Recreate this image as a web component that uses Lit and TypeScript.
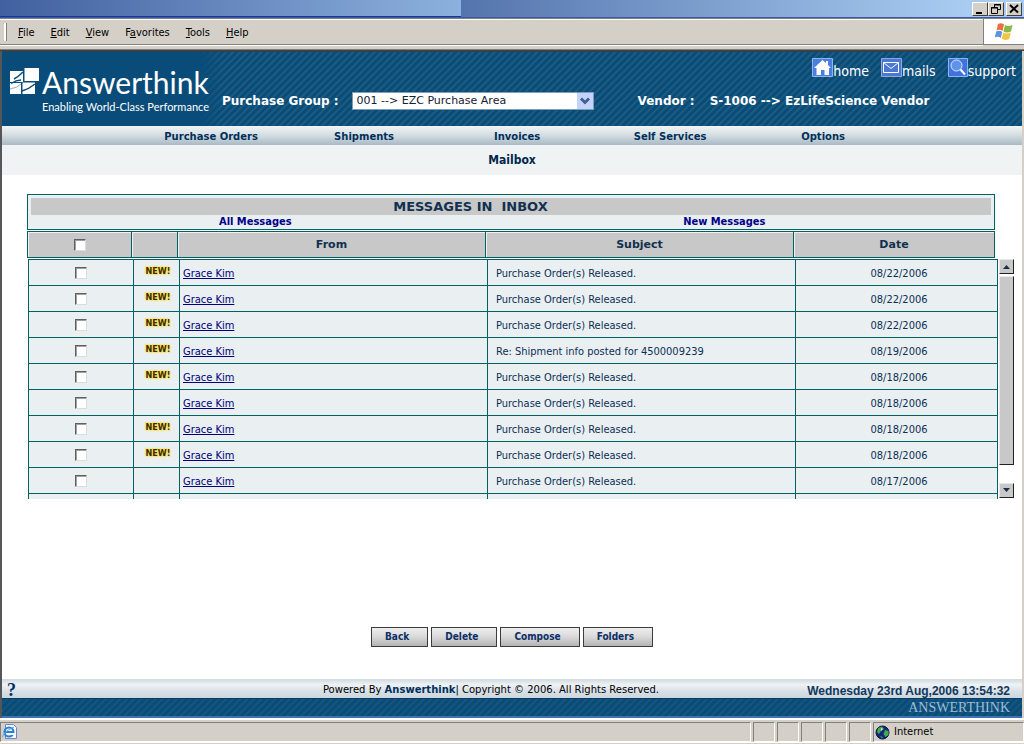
import { LitElement, html, css, svg, nothing } from "lit";
import { customElement, property } from "lit/decorators.js";

interface Message {
  from: string;
  subject: string;
  date: string;
  fresh: boolean;
}

const RELEASED = "Purchase Order(s) Released.";

const MESSAGES: Message[] = [
  { from: "Grace Kim", subject: RELEASED, date: "08/22/2006", fresh: true },
  { from: "Grace Kim", subject: RELEASED, date: "08/22/2006", fresh: true },
  { from: "Grace Kim", subject: RELEASED, date: "08/22/2006", fresh: true },
  { from: "Grace Kim", subject: "Re: Shipment info posted for 4500009239", date: "08/19/2006", fresh: true },
  { from: "Grace Kim", subject: RELEASED, date: "08/18/2006", fresh: true },
  { from: "Grace Kim", subject: RELEASED, date: "08/18/2006", fresh: false },
  { from: "Grace Kim", subject: RELEASED, date: "08/18/2006", fresh: true },
  { from: "Grace Kim", subject: RELEASED, date: "08/18/2006", fresh: true },
  { from: "Grace Kim", subject: RELEASED, date: "08/17/2006", fresh: false },
];

const MENUS: [string, string, string][] = [
  ["", "F", "ile"],
  ["", "E", "dit"],
  ["", "V", "iew"],
  ["F", "a", "vorites"],
  ["", "T", "ools"],
  ["", "H", "elp"],
];

/* ---------- browser window: title bar and menu ---------- */

@customElement("window-bar")
export class WindowBar extends LitElement {
  static styles = css`
    :host { display: block; font: 11px/14px "DejaVu Sans Condensed", "DejaVu Sans", sans-serif; }
    .title {
      display: flex; height: 18px; box-sizing: border-box;
      border-bottom: 1px solid #3c58a4;
      background: linear-gradient(90deg, #5071aa, #a9cdf2);
    }
    .caption { width: 45%; background: linear-gradient(90deg, #41609f, #8db1de); border-bottom: 1px solid #16379a; box-sizing: border-box; }
    .lead { flex: 1; background: linear-gradient(90deg, #5474ad, #a9cdf2); }
    .controls { display: flex; padding: 2px 2px 0 0; }
    .controls button {
      width: 16px; height: 14px; padding: 0; background: #d4d0c8; border: 1px solid;
      border-color: #fff #404040 #404040 #fff; display: flex;
    }
    .controls button:last-child { margin-left: 2px; }
    .menu {
      display: flex; height: 31px; box-sizing: border-box; background: #d4d0c8;
      border-top: 1px solid #808080; border-bottom: 4px solid #d4d0c8;
    }
    .inner { flex: 1; display: flex; align-items: center; border-top: 1px solid #fff; border-bottom: 1px solid #808080; box-shadow: 0 1px #fff; }
    .grip { width: 2px; height: 18px; margin: 0 11px 0 4px; border-right: 1px solid #808080; background: #fff; }
    .items { display: flex; gap: 16px; padding-top: 2px; }
    .items button { padding: 0; border: 0; background: none; font: inherit; color: #000; }
    .flag { width: 40px; border-left: 1px solid #808080; background: #fff; border-bottom: 1px solid #808080; display: flex; align-items: center; justify-content: center; }
    .edge { height: 2px; background: #404040; border-top: 1px solid #808080; box-sizing: border-box; }
  `;

  render() {
    return html`
      <div class="title">
        <div class="caption"></div>
        <div class="lead"></div>
        <div class="controls">
          <button aria-label="Minimize"><svg width="14" height="12"><path d="M3 9h6v2H3z" /></svg></button>
          <button aria-label="Restore">
            <svg width="14" height="12" fill="none" stroke="#000">
              <path d="M5.500 4V1.500h6v5H9M5 2h7M2.500 4.500h6v6h-6zM2 5h7" />
            </svg>
          </button>
          <button aria-label="Close"><svg width="14" height="12"><path d="M3 2l8 7.500M11 2L3 9.500" stroke="#000" stroke-width="2" /></svg></button>
        </div>
      </div>
      <div class="menu">
        <div class="inner">
          <span class="grip"></span>
          <div class="items">
            ${MENUS.map(([a, key, b]) => html`<button>${a}<u>${key}</u>${b}</button>`)}
          </div>
        </div>
        <div class="flag">
          <svg width="20" height="19" viewBox="0 0 20 19">
            <path d="M4 2Q7 .5 10 2.500L8.500 9Q5.500 7 2.500 8.500z" fill="#e8703a" />
            <path d="M11 3Q14 5 18.500 3L17 9.500Q13 11.500 9.500 9.500z" fill="#86b84a" />
            <path d="M2.200 9.500Q5.500 8 8.200 10L6.800 16Q4 14 .7 15.500z" fill="#5b93dc" />
            <path d="M9.200 10.500Q13 12.500 16.700 10.500L15.200 17Q11 19 7.800 16.800z" fill="#f5c440" />
          </svg>
        </div>
      </div>
      <div class="edge"></div>
    `;
  }
}

/* ---------- site header ---------- */

@customElement("site-header")
export class SiteHeader extends LitElement {
  static styles = css`
    :host { display: block; font-family: "DejaVu Sans", sans-serif; color: #fff; }
    .banner {
      display: flex; height: 75px; box-sizing: border-box;
      background: repeating-linear-gradient(135deg, #0a4c79 0 2px, #1c5c80 3px 4px, #0a4c79 5px);
      border-top: 1px solid #33404e;
    }
    .brand { display: flex; align-items: flex-start; width: 220px; padding: 14px 0 0 8px; box-sizing: border-box; background: linear-gradient(90deg, #0a4c79 90%, transparent); }
    .mark { margin-top: 2px; }
    .words { padding-left: 3px; font-family: Lato, sans-serif; white-space: nowrap; }
    .name { display: block; font-size: 30px; line-height: 32px; }
    .motto { display: block; font-size: 11px; line-height: 18px; }
    .side { flex: 1; display: flex; flex-direction: column; min-width: 0; }
    .tools { display: flex; justify-content: flex-end; gap: 12px; height: 35px; padding: 6px 6px 0 0; box-sizing: border-box; }
    .tools a { display: flex; align-items: flex-start; color: #fff; text-decoration: none; font: 14px/27px "DejaVu Sans Condensed", "DejaVu Sans", sans-serif; height: 21px; }
    .facts { display: flex; align-items: center; height: 28px; font-weight: 700; white-space: nowrap; font-size: 12px; }
    .pick { position: relative; width: 242px; height: 18px; margin: 0 44px 0 13px; }
    .pick select {
      appearance: none; display: block; width: 100%; height: 18px; box-sizing: border-box; margin: 0; padding: 0 20px 0 4px;
      border: 1px solid #7f9db9; border-radius: 0; background: #fff; color: #123;
      font: 11px/16px "DejaVu Sans", sans-serif;
    }
    .pick svg { position: absolute; right: 1px; top: 1px; pointer-events: none; }
    .vendor { padding-left: 15px; }
    .nav {
      display: grid; grid-template-columns: repeat(5, 1fr); height: 19px; padding: 0 12% 0 13%;
      background: linear-gradient(#f2f5f6, #d3dce0 50%, #a9b9c4);
    }
    .nav a { text-align: center; color: #00305c; text-decoration: none; font-size: 10px; line-height: 21px; font-weight: 700; }
    .page { margin: 0; height: 30px; background: #eff3f4; color: #00264a; text-align: center; font: 700 12px/30px "DejaVu Sans Condensed", "DejaVu Sans", sans-serif; }
  `;

  render() {
    return html`
      <div class="banner">
        <div class="brand">
          <svg class="mark" width="29" height="27" viewBox="0 0 29 27" fill="#fff">
            <path d="M0 3h13v11H0zM14.500 0H29v13H14.500zM0 15h11v11H0zM12.500 14.500H25V26H12.500z" />
            <path d="M4 11Q8 9 13 4M1 15.500Q6 12 11 12M12 23Q19 21 25 16" fill="none" stroke="#0a4c79" stroke-width="1.500" />
            <path d="M0 21Q7 20 11 16" fill="none" stroke="#8fb0c8" />
          </svg>
          <div class="words">
            <span class="name">Answerthink</span>
            <span class="motto">Enabling World-Class Performance</span>
          </div>
        </div>
        <div class="side">
          <div class="tools">
            <a href="#home">
              <svg width="21" height="20"><path d="M.5.5h20v18H.5z" fill="#4a7fe0" stroke="#8fb4f4" /><path d="M10.500 2L2 10h2.500v7h4.500v-5h3.500v5h4.500v-7H19l-3-3V3h-2v2z" fill="#fff" /></svg>home</a>
            <a href="#mails">
              <svg width="21" height="20"><path d="M.5.5h20v18H.5z" fill="#4a78d4" stroke="#8fa8d8" /><path d="M2.500 4.500h15v10h-15zM2.500 4.500l7.500 6 7.500-6" fill="none" stroke="#fff" /></svg>mails</a>
            <a href="#support">
              <svg width="20" height="20"><path d="M.5.5h19v18H.5z" fill="#3f73dc" stroke="#8fb4f4" /><circle cx="8.500" cy="7.500" r="5.500" fill="#5f93ea" stroke="#dce9ff" /><path d="M12.500 11.500l4.500 5" stroke="#fff" stroke-width="2" /></svg>support</a>
          </div>
          <div class="facts">
            <label for="group">Purchase Group :</label>
            <span class="pick">
              <select id="group"><option>001 --&gt; EZC Purchase Area</option></select>
              <svg width="16" height="16"><path d="M0 0h16v16H0z" fill="#c3d3fb" /><path d="M4 5.500l4 4 4-4" fill="none" stroke="#44608f" stroke-width="3" /></svg>
            </span>
            <span>Vendor :</span>
            <span class="vendor">S-1006 --&gt; EzLifeScience Vendor</span>
          </div>
        </div>
      </div>
      <nav class="nav">
        ${["Purchase Orders", "Shipments", "Invoices", "Self Services", "Options"].map(
          (label) => html`<a href="#">${label}</a>`
        )}
      </nav>
      <h1 class="page">Mailbox</h1>
    `;
  }
}

/* ---------- inbox ---------- */

@customElement("inbox-list")
export class InboxList extends LitElement {
  @property({ attribute: false }) messages: Message[] = [];

  static styles = css`
    :host { display: block; font: 11px/14px "DejaVu Sans Condensed", "DejaVu Sans", sans-serif; color: #0c2f55; }
    .panel { margin-right: 19px; border: 1px solid #006062; padding: 3px; box-sizing: border-box; height: 36px; background: #eaeff2; }
    .heading { margin: 0; background: #c8c8c8; text-align: center; font: 700 13px/17px "DejaVu Sans", sans-serif; padding-right: 81px; color: #12304f; white-space: pre; }
    .filters { display: grid; grid-template-columns: 11fr 12fr; text-align: center; padding: 0 22px 0 0; font-weight: 700; line-height: 13px; }
    .filters a { color: #00008b; text-decoration: none; }
    table { border-collapse: separate; border-spacing: 0; table-layout: fixed; width: 100%; }
    td, th { padding: 0; border: 0 solid #006062; border-width: 1px 0 0 1px; box-sizing: border-box; }
    td:last-child, th:last-child { border-right-width: 1px; }
    .head { margin: 1px 19px 0 0; }
    .head .c1 { width: 104px; }
    th { height: 27px; border-bottom-width: 1px; background: #c8c8c8; box-shadow: inset 1px 1px #eef2f3; font: 700 11px/14px "DejaVu Sans", sans-serif; color: #12304f; }
    .c1 { width: 105px; } .c2 { width: 46px; } .c3, .c4 { width: 308px; }
    .view { display: flex; gap: 1px; height: 240px; margin: 1px 0 0 1px; overflow: hidden; }
    .rows { flex: 1; overflow: hidden; }
    td { height: 26px; background: #eaeff2; text-align: center; }
    .from, .subject, .date { padding-top: 2px; }
    .from { text-align: left; padding-left: 3px; }
    .from a { color: #00007a; }
    .subject { text-align: left; padding-left: 8px; }
    .date { padding-left: 5px; }
    input {
      appearance: none; display: block; width: 12px; height: 12px; margin: 0 auto; background: #fff; box-sizing: border-box;
      border: 1px solid; border-color: #606060 #dcdcdc #dcdcdc #606060; box-shadow: inset 1px 1px #a0a0a0;
    }
    .new { font: 700 9px/11px "DejaVu Sans Condensed", "DejaVu Sans", sans-serif; color: #3a2c00; text-shadow: 0 0 2px #ffe25a, 0 0 2px #ffe25a, 1px 1px 1px #ffe25a, -1px -1px 1px #ffe25a; display: block; padding: 0 0 3px 3px; }
    .bar { display: flex; flex-direction: column; width: 15px; padding-bottom: 1px; }
    .bar button, .thumb { background: #c8c8c8; border: 1px solid; border-color: #e8e8e8 #202020 #202020 #e8e8e8; box-sizing: border-box; }
    .bar button { height: 15px; width: 15px; padding: 0; display: flex; align-items: center; justify-content: center; flex: none; }
    .thumb { height: 189px; margin-top: 2px; }
    .gap { flex: 1; }
  `;

  private arrow(d: string) {
    return html`<svg width="9" height="5" fill="#16304c">${svg`<path d=${d} />`}</svg>`;
  }

  private cols() {
    return html`<colgroup><col class="c1" /><col class="c2" /><col class="c3" /><col class="c4" /><col /></colgroup>`;
  }

  render() {
    return html`
      <div class="panel">
        <h2 class="heading">MESSAGES IN&nbsp; INBOX</h2>
        <div class="filters">
          <a href="#all">All Messages</a>
          <a href="#new">New Messages</a>
        </div>
      </div>
      <div class="head">
        <table>
          ${this.cols()}
          <thead>
            <tr>
              <th><input type="checkbox" aria-label="Select all" /></th>
              <th></th>
              <th>From</th>
              <th>Subject</th>
              <th>Date</th>
            </tr>
          </thead>
        </table>
      </div>
      <div class="view">
        <div class="rows">
          <table>
            ${this.cols()}
            <tbody>
              ${this.messages.map(
                (m) => html`<tr>
                  <td><input type="checkbox" aria-label="Select message" /></td>
                  <td>${m.fresh ? html`<span class="new">NEW!</span>` : nothing}</td>
                  <td class="from"><a href="#message">${m.from}</a></td>
                  <td class="subject">${m.subject}</td>
                  <td class="date">${m.date}</td>
                </tr>`
              )}
              <tr><td></td><td></td><td></td><td></td><td></td></tr>
            </tbody>
          </table>
        </div>
        <div class="bar">
          <button aria-label="Scroll up">${this.arrow("M1 5L4.500 1 8 5z")}</button>
          <div class="thumb"></div>
          <div class="gap"></div>
          <button aria-label="Scroll down">${this.arrow("M1 0h7L4.500 4z")}</button>
        </div>
      </div>
    `;
  }
}

/* ---------- footer and status bar ---------- */

@customElement("site-footer")
export class SiteFooter extends LitElement {
  static styles = css`
    :host { display: block; }
    .info {
      display: grid; grid-template-columns: 31.500% 1fr auto; height: 19px; padding: 0 12px 0 5px;
      background: linear-gradient(#cfd9de, #eef2f5 30%, #dbe2e8 60%, #ccd6dd); color: #000;
      font: 10px/22px "DejaVu Sans", sans-serif; white-space: nowrap;
    }
    .help { font: 700 18px/22px "Liberation Serif", serif; color: #003060; text-decoration: none; }
    .info b { color: #00305c; }
    .clock { font: 700 12px/24px "Liberation Sans", sans-serif; color: #12385c; }
    .strip {
      height: 20px; box-sizing: border-box; border-top: 1px solid #0c3c66; border-bottom: 2px solid #3f74b4; padding-right: 12px;
      background: repeating-linear-gradient(135deg, #0a4c79 0 2px, #16567c 3px 4px, #0a4c79 5px);
      text-align: right; color: #9dbcd8; font: 14px/17px "Liberation Serif", serif;
    }
  `;

  render() {
    return html`
      <div class="info">
        <a class="help" href="#help">?</a>
        <span>Powered By <b>Answerthink</b>| Copyright © 2006. All Rights Reserved.</span>
        <span class="clock">Wednesday 23rd Aug,2006 13:54:32</span>
      </div>
      <div class="strip">ANSWERTHINK</div>
    `;
  }
}

@customElement("status-bar")
export class StatusBar extends LitElement {
  static styles = css`
    :host {
      display: block; background: #d4d0c8; border-top: 2px solid #fff; box-sizing: border-box; height: 26px; padding-top: 2px;
      font: 11px/18px "DejaVu Sans Condensed", "DejaVu Sans", sans-serif; color: #000;
    }
    .cells { display: flex; gap: 2px; height: 20px; border-bottom: 1px solid #fff; }
    .cell { box-sizing: border-box; width: 22px; border: 1px solid; border-color: #808080 #fff #fff #808080; }
    .main { flex: 1; }
    .zone { width: 151px; display: flex; align-items: center; gap: 4px; padding-left: 1px; }
  `;

  render() {
    return html`
      <div class="cells">
        <div class="cell main">
          <svg width="17" height="17" viewBox="0 0 17 17">
            <path d="M4.500 1.500h8l3 3v11h-11z" fill="#f5f8ff" stroke="#6d86c4" />
            <circle cx="8" cy="9" r="4.500" fill="none" stroke="#2c7fd0" stroke-width="2" />
            <path d="M4 9h8" stroke="#2c7fd0" stroke-width="2" /><path d="M10 11h5" stroke="#f5f8ff" stroke-width="2" />
            <path d="M1.500 14Q2 9 13 4" fill="none" stroke="#58a8e8" />
          </svg>
        </div>
        ${[1, 2, 3, 4, 5].map(() => html`<div class="cell"></div>`)}
        <div class="cell zone">
          <svg width="15" height="15" viewBox="0 0 15 15">
            <circle cx="7.500" cy="7.500" r="6.500" fill="#16267e" stroke="#0a1440" />
            <path d="M3 3l4-1.500L9 4 6 6 4 9 2 7zM10 5l3.500 1v4l-3 2-2-3zM5 11l3 1-1 1.500z" fill="#3fae49" />
            <path d="M6 3l2 1-2 2z" fill="#cfe8ff" />
          </svg>
          <span>Internet</span>
        </div>
      </div>
    `;
  }
}

@customElement("app-root")
export class AppRoot extends LitElement {
  static styles = css`
    :host { display: flex; flex-direction: column; min-height: 100vh; background: #fff; }
    .page { flex: 1; display: flex; flex-direction: column; border-left: 2px solid #55565a; border-right: 2px solid #d4d0c8; }
    .body { flex: 1; display: flex; flex-direction: column; padding: 19px 8px 32px 25px; }
    .actions { display: flex; justify-content: center; gap: 3px; margin-top: auto; padding: 24px 17px 0 0; }
    .actions button {
      height: 20px; padding: 0 18px 0 13px; border: 1px solid #3c3c3c; border-radius: 0;
      background: linear-gradient(#efefef, #d8d8d8 50%, #b4b4b4);
      color: #0c2f66; font: 700 10px/18px "DejaVu Sans Condensed", "DejaVu Sans", sans-serif;
    }
  `;

  render() {
    return html`
      <window-bar></window-bar>
      <div class="page">
        <site-header></site-header>
        <main class="body">
          <inbox-list .messages=${MESSAGES}></inbox-list>
          <div class="actions">
            ${["Back", "Delete", "Compose", "Folders"].map((label) => html`<button>${label}</button>`)}
          </div>
        </main>
        <site-footer></site-footer>
      </div>
      <status-bar></status-bar>
    `;
  }
}
